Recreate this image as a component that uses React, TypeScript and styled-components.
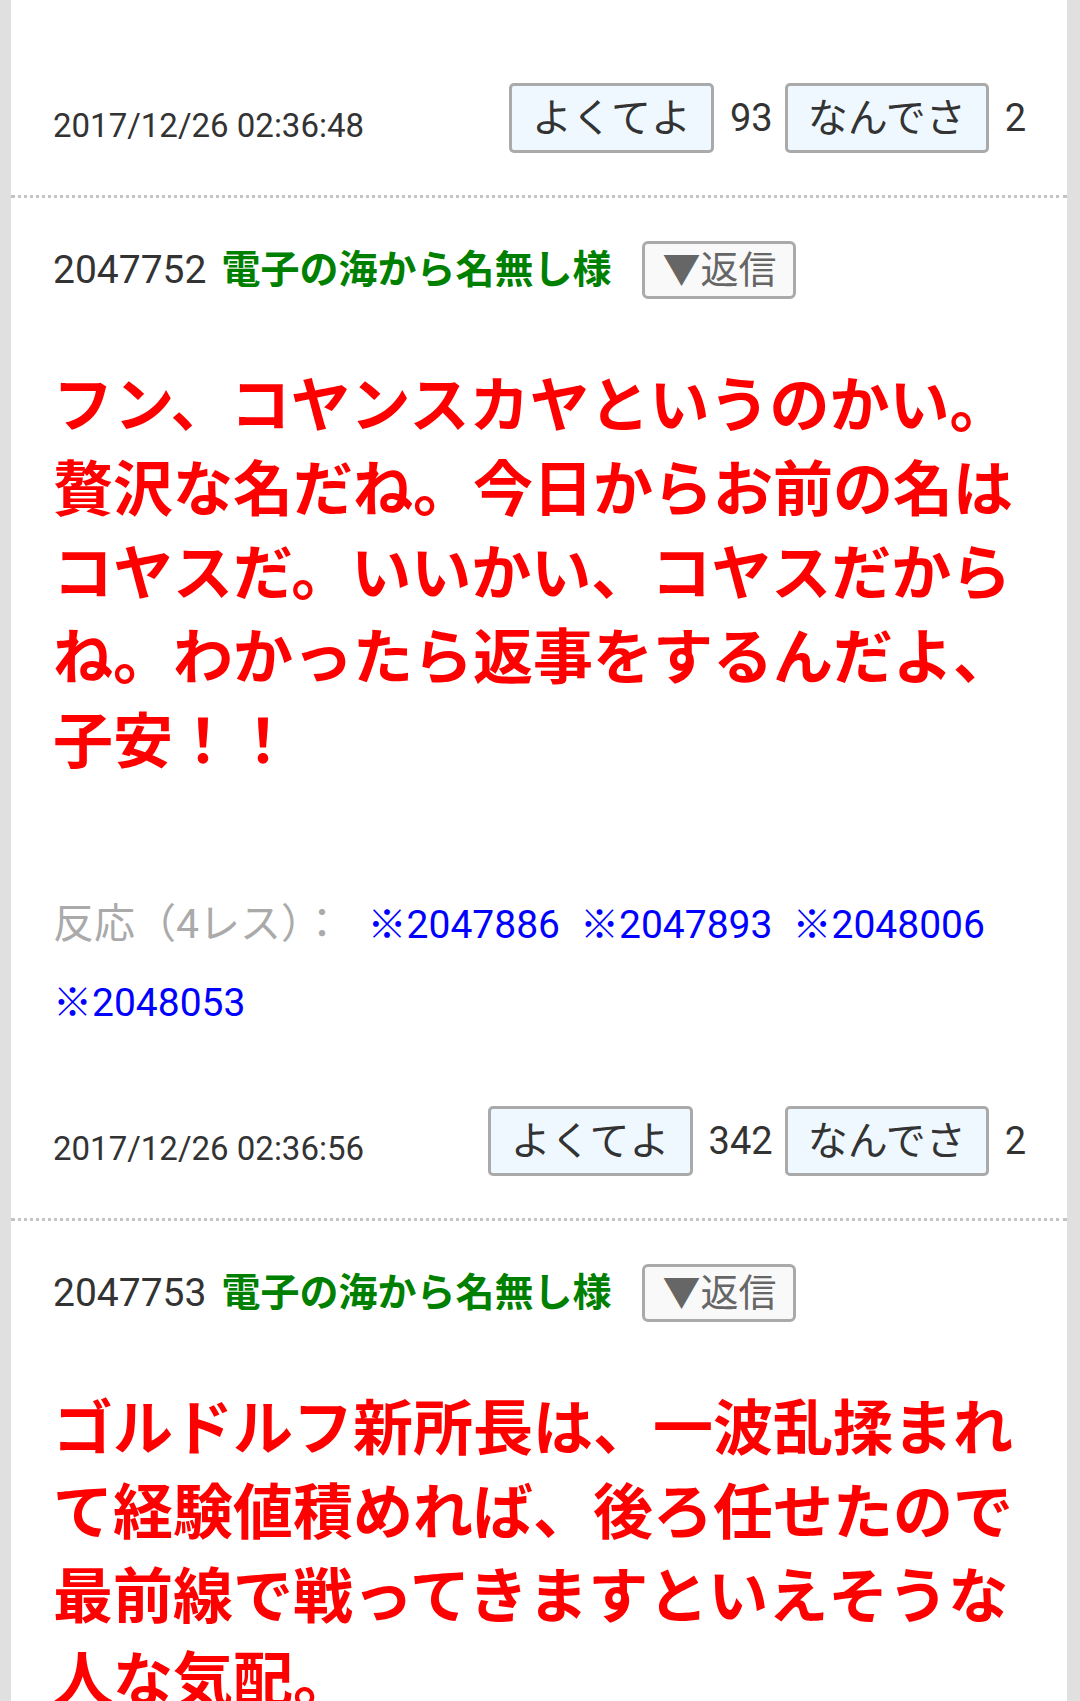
import styled, { createGlobalStyle } from 'styled-components';

type Post = {
  id?: string;
  name?: string;
  body?: string;
  reactions?: string[];
  date?: string;
  good?: number;
  bad?: number;
};

const posts: Post[] = [
  { date: '2017/12/26 02:36:48', good: 93, bad: 2 },
  {
    id: '2047752',
    name: '電子の海から名無し様',
    body: 'フン、コヤンスカヤというのかい。贅沢な名だね。今日からお前の名はコヤスだ。いいかい、コヤスだからね。わかったら返事をするんだよ、子安！！',
    reactions: ['2047886', '2047893', '2048006', '2048053'],
    date: '2017/12/26 02:36:56',
    good: 342,
    bad: 2,
  },
  {
    id: '2047753',
    name: '電子の海から名無し様',
    body: 'ゴルドルフ新所長は、一波乱揉まれて経験値積めれば、後ろ任せたので最前線で戦ってきますといえそうな人な気配。',
  },
];

export default function App() {
  return (
    <>
      <GlobalStyle />
      <Card>
        {posts.map((p, i) => (
          <PostBox key={i} $first={i === 0}>
            {p.id && (
              <Header>
                <ResNo>{p.id}</ResNo>
                <Name>{p.name}</Name>
                <ReplyBtn>▼返信</ReplyBtn>
              </Header>
            )}
            {p.body && <Body>{p.body}</Body>}
            {p.reactions && (
              <Reactions>
                <ReactLabel>反応（{p.reactions.length}レス）：</ReactLabel>
                {p.reactions.map(r => (
                  <ReactLink key={r} href="#">※{r}</ReactLink>
                ))}
              </Reactions>
            )}
            {p.date && (
              <Footer $alone={!p.id}>
                <DateText>{p.date}</DateText>
                <Votes>
                  <VoteBtn>よくてよ</VoteBtn>
                  <Count>{p.good}</Count>
                  <VoteBtn>なんでさ</VoteBtn>
                  <Count>{p.bad}</Count>
                </Votes>
              </Footer>
            )}
          </PostBox>
        ))}
      </Card>
    </>
  );
}

const GlobalStyle = createGlobalStyle`
  body {
    margin: 0;
    background: #e0e0e0;
    font-family: Roboto, "Noto Sans CJK JP", sans-serif;
    color: #333;
  }
`;

const Card = styled.main`
  margin: 0 13px 0 11px;
  background: #fff;
`;

const PostBox = styled.article<{ $first?: boolean }>`
  padding: ${({ $first }) => ($first ? '83px' : '43px')} 41px 42px 42px;
  border-bottom: 3px dotted #c4c4c4;
`;

const Header = styled.div`
  display: flex;
  align-items: center;
  height: 58px;
`;

const ResNo = styled.span`
  font-size: 39px;
  color: #333;
`;

const Name = styled.span`
  margin-left: 15px;
  padding-bottom: 8px;
  font-size: 39px;
  font-weight: 700;
  color: #008000;
  font-family: "Noto Sans CJK JP", sans-serif;
`;

const ReplyBtn = styled.button`
  margin-left: 31px;
  height: 58px;
  padding: 0 17px 6px;
  border: 3px solid #aaa;
  border-radius: 6px;
  background: #f9f9f9;
  color: #666;
  font-size: 38px;
  line-height: 42px;
  font-family: "Noto Sans CJK JP", sans-serif;
`;

const Body = styled.p`
  margin: 60px 0 0;
  font-size: 60px;
  line-height: 84px;
  font-weight: 700;
  color: #ff0000;
  font-family: "Noto Sans CJK JP", sans-serif;
`;

const Reactions = styled.div`
  margin-top: 106px;
  font-size: 39px;
  line-height: 78px;
`;

const ReactLabel = styled.span`
  margin-right: 25px;
  font-size: 41px;
  color: #aaa;
`;

const ReactLink = styled.a`
  display: inline-block;
  margin-right: 20px;
  color: #0000ff;
  text-decoration: none;
`;

const Footer = styled.div<{ $alone?: boolean }>`
  display: flex;
  align-items: center;
  justify-content: space-between;
  margin-top: ${({ $alone }) => ($alone ? '0' : '64px')};
`;

const DateText = styled.span`
  padding-top: 15px;
  font-size: 33px;
  color: #333;
`;

const Votes = styled.div`
  display: flex;
  align-items: center;
`;

const VoteBtn = styled.button`
  height: 70px;
  padding: 0 20px 6px;
  border: 3px solid #aaa;
  border-radius: 5px;
  background: #f0f8ff;
  color: #333;
  font-size: 40px;
  line-height: 48px;
  font-family: "Noto Sans CJK JP", sans-serif;
`;

const Count = styled.span`
  margin: 0 12px 0 16px;
  font-size: 38px;
  color: #333;

  &:last-child {
    margin-right: 0;
  }
`;
